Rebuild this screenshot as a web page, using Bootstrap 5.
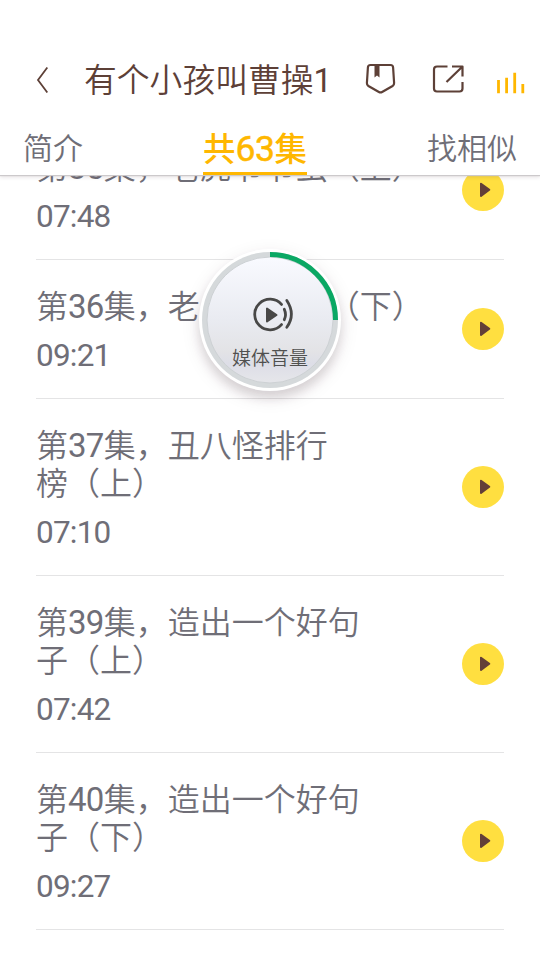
<!DOCTYPE html>
<html lang="zh-CN">
<head>
<meta charset="utf-8">
<meta name="viewport" content="width=device-width, initial-scale=1">
<title>有个小孩叫曹操1</title>
<link href="https://cdn.jsdelivr.net/npm/bootstrap@5.3.0/dist/css/bootstrap.min.css" rel="stylesheet">
<style>
body{height:960px;overflow:hidden;background:#fff;color:#6f6e77;font-family:Roboto,"Noto Sans CJK SC",sans-serif;font-weight:350}
.app-head{height:175px;padding-top:57px;z-index:5;box-shadow:0 1px 1px #ccc9cb,0 2px 4px rgba(60,30,40,.14)}
.title-bar{height:46px;padding:0 15px 0 36px;color:#5d4037}
.title-text{font-size:32.8px;line-height:46px;margin-left:35px;width:246px;padding-top:2px;white-space:nowrap}
.tabs{height:72px;padding:0 23px}
.tab{font-size:30px;line-height:44px;padding-top:24px;height:72px;color:#6f6e77;text-decoration:none}
.tab-on{color:#ffb700;font-size:32.5px;font-weight:500;padding-top:25px;border-bottom:3px solid #ffb700;width:104px;white-space:nowrap}
.tab-on .num{font-size:35.5px;font-weight:400;letter-spacing:-.5px;-webkit-text-stroke:.5px #ffb700}
.episodes{margin:-54px 36px 0}
.episode{padding:28px 0 24px;border-bottom:1px solid #e4e4e5}
.ep-name{font-size:32px;line-height:38px;white-space:nowrap}
.num{font-weight:400;line-height:1}
.ep-name .num{font-size:33px;letter-spacing:-.7px}
.ep-time{font-size:31.5px;font-weight:400;letter-spacing:-.8px;line-height:37px;margin-top:11px}
.play{width:42px;height:42px;background:#ffdf40;border:0;padding:0;margin-bottom:4px}
.volume{left:199px;top:249px;width:142px;height:142px;z-index:10;background:#fff;box-shadow:0 7px 10px rgba(60,40,50,.15),0 6px 18px 2px rgba(60,30,50,.08)}
.volume-label{left:0;right:0;top:97px;font-size:19px;line-height:26px;color:#50504f}
</style>
<script src="https://cdn.jsdelivr.net/npm/bootstrap@5.3.0/dist/js/bootstrap.bundle.min.js"></script>
</head>
<body>
<svg class="d-none"><symbol id="tri" viewBox="0 0 42 42"><path d="M19 14.700v12.300l8.300-6.200z" fill="#633f38" stroke="#633f38" stroke-width="2" stroke-linejoin="round"/></symbol></svg>
<header class="app-head bg-white position-relative">
  <div class="title-bar d-flex align-items-center">
    <svg width="13" height="28" fill="none" stroke="#5d4037" stroke-width="1.800"><path d="M11.300 1.500 2 14l9.300 12.500"/></svg>
    <div class="title-text">有个小孩叫曹操<span class="num">1</span></div>
    <svg class="ms-auto" width="166" height="46" fill="none" stroke="#5d4037" stroke-width="2.200" stroke-linejoin="round">
      <path d="M11.500 8h20q2.500 0 2.600 2.500l1 15.500q.1 2-1.500 3l-10.500 6q-1.600.9-3.200 0l-10.500-6q-1.600-1-1.500-3l1-15.500q.1-2.500 2.600-2.500z"/>
      <path d="M15.500 8v12.500l2.500-2 2.500 2V8z" fill="#5d4037" stroke="none"/>
      <path d="M88.500 9.500H78q-3 0-3 3v19q0 3 3 3h22.500q3 0 3-3V25M93 9.500h10.500v10M103.500 9.500 87.500 25"/>
      <path d="M139.500 23v13.300M147.600 20.700v15.600M155.700 15.800v20.500M163.800 27v9.300" stroke="#ffb700" stroke-width="2.800"/>
    </svg>
  </div>
  <nav class="tabs d-flex justify-content-between">
    <a class="tab">简介</a><a class="tab tab-on">共<span class="num">63</span>集</a><a class="tab">找相似</a>
  </nav>
</header>
<main class="episodes">
  <div class="episode d-flex justify-content-between align-items-center"><div><div class="ep-name">第<span class="num">35</span>集，老虎节节虫（上）</div><div class="ep-time">07:48</div></div><button class="play rounded-circle"><svg width="42" height="42" class="d-block"><use href="#tri"/></svg></button></div>
  <div class="episode d-flex justify-content-between align-items-center"><div><div class="ep-name">第<span class="num">36</span>集，老虎节节虫（下）</div><div class="ep-time">09:21</div></div><button class="play rounded-circle"><svg width="42" height="42" class="d-block"><use href="#tri"/></svg></button></div>
  <div class="episode d-flex justify-content-between align-items-center"><div><div class="ep-name">第<span class="num">37</span>集，丑八怪排行<br>榜（上）</div><div class="ep-time">07:10</div></div><button class="play rounded-circle"><svg width="42" height="42" class="d-block"><use href="#tri"/></svg></button></div>
  <div class="episode d-flex justify-content-between align-items-center"><div><div class="ep-name">第<span class="num">39</span>集，造出一个好句<br>子（上）</div><div class="ep-time">07:42</div></div><button class="play rounded-circle"><svg width="42" height="42" class="d-block"><use href="#tri"/></svg></button></div>
  <div class="episode d-flex justify-content-between align-items-center"><div><div class="ep-name">第<span class="num">40</span>集，造出一个好句<br>子（下）</div><div class="ep-time">09:27</div></div><button class="play rounded-circle"><svg width="42" height="42" class="d-block"><use href="#tri"/></svg></button></div>
</main>
<div class="volume position-absolute rounded-circle">
  <svg width="142" height="142" class="d-block" fill="none">
    <defs><linearGradient id="face" x1="0" y1="0" x2="0" y2="1"><stop offset="0" stop-color="#f9faff"/><stop offset=".5" stop-color="#e9ebf1"/><stop offset=".75" stop-color="#e3e3e6"/><stop offset=".85" stop-color="#dddee7"/><stop offset="1" stop-color="#e6e6ea"/></linearGradient></defs>
    <circle cx="71" cy="71" r="68" fill="#d5d9db"/>
    <circle cx="71" cy="71" r="63" fill="url(#face)" stroke="#cdd1d4" stroke-width="1"/>
    <path d="M71 5.500A65.500 65.500 0 0 1 136.500 71" stroke="#0aa864" stroke-width="5"/>
    <g stroke="#484847" stroke-width="2.800" stroke-linecap="round">
      <path d="M82.500 55.400A15.300 15.300 0 1 0 82.500 75.600"/>
      <path d="M85.300 60.300q2.400 5.200 0 10.400M87.800 51.500q9.200 14 0 26.800"/>
      <path d="M68 59.500v13l9.500-6.500z" fill="#484847" stroke-width="2" stroke-linejoin="round"/>
    </g>
  </svg>
  <div class="volume-label position-absolute text-center">媒体音量</div>
</div>
</body>
</html>
